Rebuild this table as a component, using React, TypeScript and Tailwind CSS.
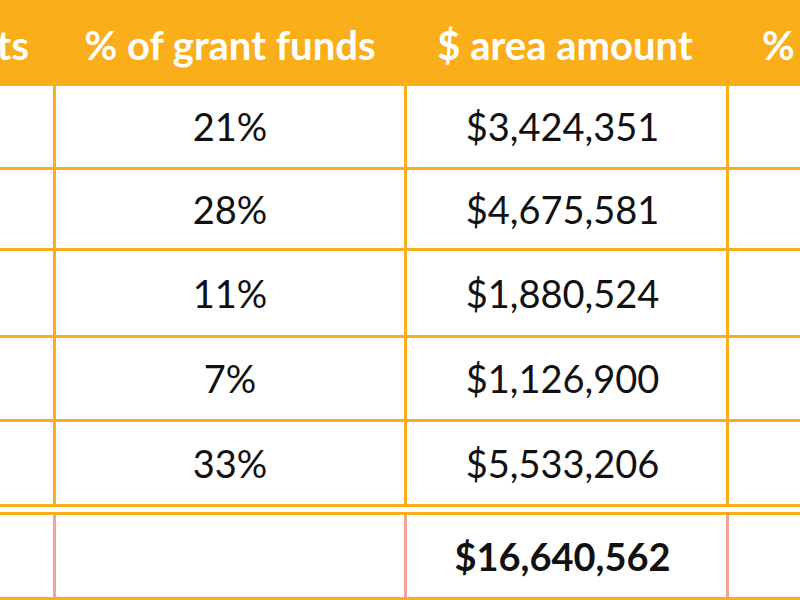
const rows = [
  { pct: "21%", amount: "$3,424,351", h: "h-[84px]" },
  { pct: "28%", amount: "$4,675,581", h: "h-[81px]" },
  { pct: "11%", amount: "$1,880,524", h: "h-[87px]" },
  { pct: "7%", amount: "$1,126,900", h: "h-[84px]" },
  { pct: "33%", amount: "$5,533,206", h: "h-[85px]" },
];

export default function App() {
  return (
    <div
      className="w-[800px] h-[600px] overflow-hidden bg-white text-[#111]"
      style={{ fontFamily: "Lato, 'Open Sans', sans-serif" }}
    >
      {/* header */}
      <div className="flex h-[86px] bg-[#f9ae1a] text-white font-bold text-[40px] items-center pt-[4px]">
        <div className="w-[56px] shrink-0 flex justify-end pr-[27px] whitespace-nowrap">ts</div>
        <div className="w-[348px] shrink-0 text-center whitespace-nowrap">% of grant funds</div>
        <div className="w-[322px] shrink-0 text-center whitespace-nowrap">$ area amount</div>
        <div className="flex-1 pl-[36px] whitespace-nowrap">%</div>
      </div>

      {rows.map((r) => (
        <div key={r.pct} className={`flex ${r.h} border-b-[3px] border-[#f9ae1a] text-[38px]`}>
          <div className="w-[53px] shrink-0" />
          <div className="w-[351px] shrink-0 border-l-[3px] border-[#f9ae1a] flex items-center justify-center">
            {r.pct}
          </div>
          <div className="w-[322px] shrink-0 border-l-[3px] border-[#f9ae1a] flex items-center justify-center pr-[8px]">
            {r.amount}
          </div>
          <div className="flex-1 border-l-[3px] border-[#f9ae1a]" />
        </div>
      ))}

      {/* total */}
      <div className="flex h-[88px] mt-[5px] border-y-[3px] border-[#f9ae1a] text-[38px] font-bold">
        <div className="w-[53px] shrink-0" />
        <div className="w-[351px] shrink-0 border-l-[3px] border-[#f0a396]" />
        <div className="w-[322px] shrink-0 border-l-[3px] border-[#f0a396] flex items-center justify-center pr-[8px]">
          $16,640,562
        </div>
        <div className="flex-1 border-l-[3px] border-[#f0a396]" />
      </div>
    </div>
  );
}
